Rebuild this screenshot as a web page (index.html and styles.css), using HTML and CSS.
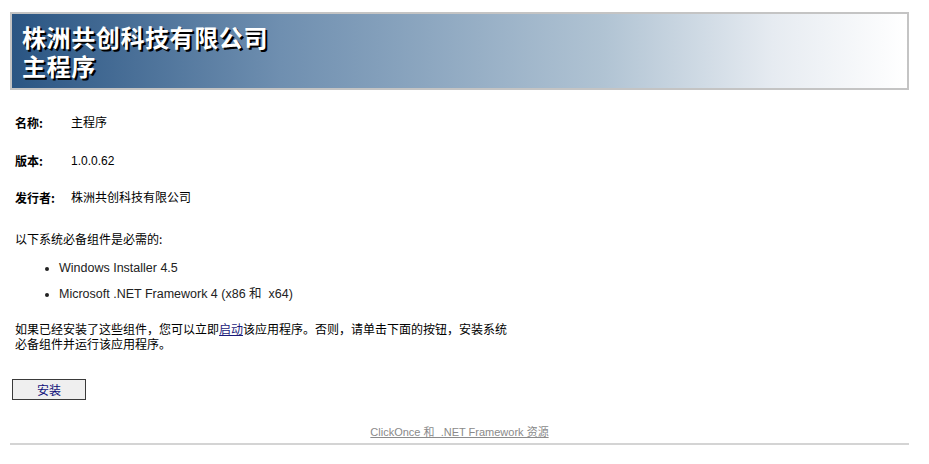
FILE: index.html
```html
<!DOCTYPE html>
<html lang="zh-CN">
<head>
    <meta charset="UTF-8">
    <title>主程序</title>
    <link rel="stylesheet" href="styles.css">
</head>
<body>
    <div class="page">
        <div class="banner">
            <div class="banner-title">株洲共创科技有限公司</div>
            <div class="banner-title">主程序</div>
        </div>

        <div class="info">
            <div class="info-row">
                <span class="info-label">名称:</span>
                <span class="info-value">主程序</span>
            </div>
            <div class="info-row">
                <span class="info-label">版本:</span>
                <span class="info-value">1.0.0.62</span>
            </div>
            <div class="info-row">
                <span class="info-label">发行者:</span>
                <span class="info-value">株洲共创科技有限公司</span>
            </div>
        </div>

        <p class="prereq-title">以下系统必备组件是必需的:</p>
        <ul class="prereq-list">
            <li>Windows Installer 4.5</li>
            <li>Microsoft .NET Framework 4 (x86 和&nbsp; x64)</li>
        </ul>

        <p class="note">如果已经安装了这些组件，您可以立即<a href="#">启动</a>该应用程序。否则，请单击下面的按钮，安装系统<br>必备组件并运行该应用程序。</p>

        <button class="install-btn" type="button">安装</button>

        <div class="footer">
            <a href="#">ClickOnce 和&nbsp; .NET Framework 资源</a>
        </div>
    </div>
</body>
</html>
```

FILE: styles.css
```css
* {
    margin: 0;
    padding: 0;
    box-sizing: border-box;
}

body {
    background: #fff;
    color: #000;
    font-family: Tahoma, "Liberation Sans", "Noto Sans CJK SC", sans-serif;
    font-size: 12px;
}

.page {
    width: 899px;
    margin-left: 10px;
    padding-top: 12px;
}

.banner {
    height: 78px;
    border: 2px solid #c4c4c4;
    background: linear-gradient(to right, #2a5583 0%, #6f8fb0 30%, #b0c3d3 66%, #e6ebf1 85%, #ffffff 100%);
    padding: 8px 0 0 10px;
}

.banner-title {
    font-family: "Noto Sans CJK SC", sans-serif;
    font-size: 24px;
    font-weight: bold;
    letter-spacing: 0.6px;
    line-height: 29px;
    color: #fff;
    text-shadow: 2px 2px 0 #000;
}

.info {
    padding-left: 5px;
    margin-top: 25px;
}

.info-row {
    display: flex;
    line-height: 16px;
    margin-bottom: 22px;
}

.info-row:nth-child(2) {
    margin-bottom: 21px;
}

.info-row:last-child {
    margin-bottom: 0;
}

.info-label {
    width: 56px;
    font-weight: bold;
    font-family: "Noto Sans CJK SC", sans-serif;
}

.info-value {
    font-family: "Liberation Sans", "Noto Sans CJK SC", sans-serif;
}

.prereq-title {
    padding-left: 5px;
    margin-top: 25px;
    line-height: 16px;
    font-family: "Noto Sans CJK SC", sans-serif;
}

.prereq-list {
    list-style: disc;
    padding-left: 49px;
    margin-top: 13px;
    font-family: "Liberation Sans", "Noto Sans CJK SC", sans-serif;
    font-size: 12.5px;
    color: #222;
}

.prereq-list li {
    line-height: 16px;
    margin-bottom: 10px;
}

.note {
    padding-left: 5px;
    margin-top: 19px;
    line-height: 15px;
    font-family: "Noto Sans CJK SC", sans-serif;
}

.note a {
    color: #1a1a7a;
    text-decoration: underline;
}

.install-btn {
    display: block;
    width: 74px;
    height: 21px;
    margin: 28px 0 0 2px;
    border: 1px solid #3a3a3a;
    background: #efefef;
    color: #10107a;
    font-family: "Noto Sans CJK SC", sans-serif;
    font-size: 12px;
    line-height: 18px;
}

.footer {
    margin-top: 24px;
    padding-bottom: 3px;
    border-bottom: 2px solid #d4d4d4;
    text-align: center;
    line-height: 16px;
}

.footer a {
    color: #8a8a8a;
    text-decoration: underline;
    font-family: "Liberation Sans", "Noto Sans CJK SC", sans-serif;
    font-size: 11px;
}
```
